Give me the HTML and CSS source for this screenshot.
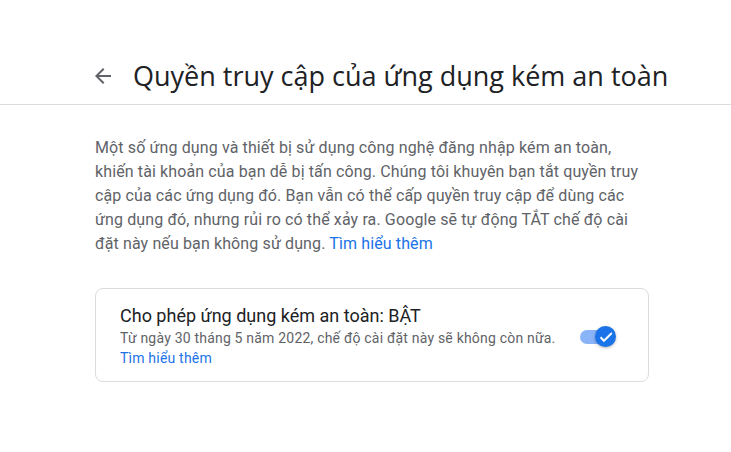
FILE: index.html
```html
<!DOCTYPE html>
<html lang="vi">
<head>
<meta charset="utf-8">
<link rel="stylesheet" href="styles.css">
</head>
<body>
<header class="header">
  <div class="header-inner">
    <span class="back">
      <svg width="24" height="24" viewBox="0 0 24 24"><path d="M20 11H7.83l5.59-5.59L12 4l-8 8 8 8 1.41-1.41L7.83 13H20v-2z" fill="#5f6368"/></svg>
    </span>
    <h1 class="title">Quyền truy cập của ứng dụng kém an toàn</h1>
  </div>
</header>
<main class="main">
  <p class="desc">Một số ứng dụng và thiết bị sử dụng công nghệ đăng nhập kém an toàn,<br>khiến tài khoản của bạn dễ bị tấn công. Chúng tôi khuyên bạn tắt quyền truy<br>cập của các ứng dụng đó. Bạn vẫn có thể cấp quyền truy cập để dùng các<br>ứng dụng đó, nhưng rủi ro có thể xảy ra. Google sẽ tự động TẮT chế độ cài<br>đặt này nếu bạn không sử dụng. <a class="link" href="#">Tìm hiểu thêm</a></p>
  <section class="card">
    <div class="card-text">
      <div class="card-title">Cho phép ứng dụng kém an toàn: BẬT</div>
      <div class="card-sub">Từ ngày 30 tháng 5 năm 2022, chế độ cài đặt này sẽ không còn nữa.</div>
      <a class="link small" href="#">Tìm hiểu thêm</a>
    </div>
    <div class="toggle">
      <span class="track"></span>
      <span class="knob">
        <svg width="16" height="16" viewBox="0 0 24 24"><path d="M9 16.17L4.83 12l-1.42 1.41L9 19 21 7l-1.41-1.41z" fill="#fff" stroke="#fff" stroke-width="1.4" stroke-linejoin="round"/></svg>
      </span>
    </div>
  </section>
</main>
</body>
</html>
```
FILE: styles.css
```css
* { box-sizing: border-box; }
body {
  margin: 0;
  font-family: Roboto, "Noto Sans", Arial, sans-serif;
  background: #fff;
  color: #5f6368;
}
.header {
  border-bottom: 1px solid #dadce0;
  padding-top: 56px;
  padding-bottom: 8px;
}
.header-inner {
  display: flex;
  align-items: center;
  padding-left: 91px;
}
.back {
  display: flex;
  width: 24px;
  height: 24px;
  margin-right: 18px;
}
.title {
  margin: 0;
  font-family: "Open Sans", Roboto, sans-serif;
  font-weight: 400;
  font-size: 27px;
  line-height: 40px;
  color: #202124;
}
.main {
  padding: 31px 95px 0;
}
.desc {
  margin: 0;
  width: 600px;
  font-size: 16px;
  line-height: 24px;
  letter-spacing: 0.12px;
  white-space: nowrap;
  color: #5f6368;
}
.link {
  color: #1a73e8;
  text-decoration: none;
}
.card {
  margin-top: 32px;
  width: 554px;
  border: 1px solid #dadce0;
  border-radius: 8px;
  padding: 15px 24px 13px;
  display: flex;
  align-items: flex-start;
}
.card-text { flex: 1; }
.card-title {
  font-size: 18px;
  line-height: 24px;
  color: #202124;
}
.card-sub {
  font-size: 14px;
  line-height: 20px;
  letter-spacing: 0.2px;
  color: #5f6368;
}
.small {
  font-size: 14px;
  line-height: 20px;
  letter-spacing: 0.2px;
  display: block;
}
.toggle {
  position: relative;
  width: 36px;
  height: 20px;
  margin-top: 23px;
  margin-right: 8px;
}
.track {
  position: absolute;
  left: 0;
  top: 3px;
  width: 34px;
  height: 14px;
  border-radius: 7px;
  background: #8ab4f8;
}
.knob {
  position: absolute;
  left: 15px;
  top: -1px;
  width: 21px;
  height: 21px;
  border-radius: 50%;
  background: #1a73e8;
  box-shadow: 0 1px 3px rgba(0,0,0,0.3);
  display: flex;
  align-items: center;
  justify-content: center;
}
```
